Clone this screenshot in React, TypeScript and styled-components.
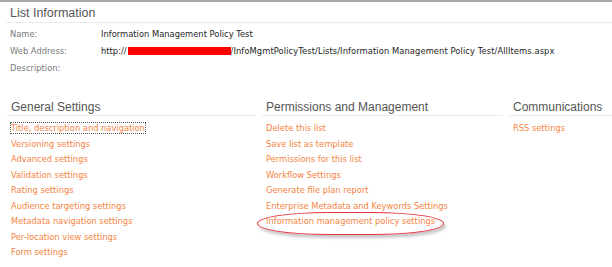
import styled, { createGlobalStyle } from "styled-components"

const GlobalStyle = createGlobalStyle`
  html, body {
    margin: 0;
    padding: 0;
    background: #ffffff;
  }
  body {
    font-family: "DejaVu Sans", Verdana, sans-serif;
  }
`

const Page = styled.div`
  width: 612px;
  height: 267px;
  box-sizing: border-box;
  border-top: 2px solid #a9a9a9;
  overflow: hidden;
`

// 상단 List Information 영역
const InfoHeader = styled.div`
  margin-left: 6px;
  padding: 2px 0 0 4px;
  border-bottom: 1px solid #ebebeb;
  font-family: "Liberation Sans", Arial, sans-serif;
  font-size: 12.5px;
  line-height: 18px;
  color: #555555;
`

const InfoTable = styled.div`
  display: grid;
  grid-template-columns: 91px 1fr;
  padding: 3px 0 0 10px;
  font-size: 8.35px;
  line-height: 17px;
`

const Label = styled.div`
  color: #7a7a7a;
`

const Value = styled.div`
  color: #1e1e1e;
  white-space: nowrap;
`

const UrlTail = styled.span`
  letter-spacing: 0.08px;
`

const Redacted = styled.span`
  display: inline-block;
  width: 103px;
  height: 8px;
  margin-left: 1px;
  background: #ff0000;
  vertical-align: -1px;
`

// 설정 섹션 3열
const Sections = styled.div`
  display: grid;
  grid-template-columns: 249px 241px 1fr;
  column-gap: 6px;
  margin: 22px 0 0 7px;
`

const Column = styled.div``

const Heading = styled.div`
  padding-left: 4px;
  border-bottom: 1px solid #ebebeb;
  font-family: "Liberation Sans", Arial, sans-serif;
  font-size: 12px;
  line-height: 16px;
  color: #555555;
  white-space: nowrap;
`

const LinkList = styled.ul`
  list-style: none;
  margin: 5px 0 0;
  padding: 0 0 0 4px;
  font-size: 8.3px;
  line-height: 15.5px;
`

const LinkItem = styled.li<{ $focused?: boolean }>`
  position: relative;
  color: #f5843f;
  white-space: nowrap;

  span {
    outline: ${(p) => (p.$focused ? "1px dotted #555555" : "none")};
    outline-offset: 0px;
  }
`

const Annotation = styled.span`
  position: absolute;
  left: -9px;
  top: -2px;
  width: 187px;
  height: 23px;
  box-sizing: border-box;
  border: 1.5px solid #e8343e;
  border-radius: 38% / 50%;
  box-shadow: 2px 3px 3px rgba(0, 0, 0, 0.22);
  pointer-events: none;
`

const general = [
  "Title, description and navigation",
  "Versioning settings",
  "Advanced settings",
  "Validation settings",
  "Rating settings",
  "Audience targeting settings",
  "Metadata navigation settings",
  "Per-location view settings",
  "Form settings",
]

const permissions = [
  "Delete this list",
  "Save list as template",
  "Permissions for this list",
  "Workflow Settings",
  "Generate file plan report",
  "Enterprise Metadata and Keywords Settings",
  "Information management policy settings",
]

const communications = ["RSS settings"]

export default function App() {
  return (
    <>
      <GlobalStyle />
      <Page>
        <InfoHeader>List Information</InfoHeader>
        <InfoTable>
          <Label>Name:</Label>
          <Value>Information Management Policy Test</Value>
          <Label>Web Address:</Label>
          <Value>
            http://
            <Redacted />
            <UrlTail>/InfoMgmtPolicyTest/Lists/Information Management Policy Test/AllItems.aspx</UrlTail>
          </Value>
          <Label>Description:</Label>
          <Value></Value>
        </InfoTable>

        <Sections>
          <Column>
            <Heading>General Settings</Heading>
            <LinkList>
              {general.map((t, i) => (
                <LinkItem key={t} $focused={i === 0}>
                  <span>{t}</span>
                </LinkItem>
              ))}
            </LinkList>
          </Column>
          <Column>
            <Heading>Permissions and Management</Heading>
            <LinkList>
              {permissions.map((t) => (
                <LinkItem key={t}>
                  <span>{t}</span>
                  {t === "Information management policy settings" && <Annotation />}
                </LinkItem>
              ))}
            </LinkList>
          </Column>
          <Column>
            <Heading>Communications</Heading>
            <LinkList>
              {communications.map((t) => (
                <LinkItem key={t}>
                  <span>{t}</span>
                </LinkItem>
              ))}
            </LinkList>
          </Column>
        </Sections>
      </Page>
    </>
  )
}
